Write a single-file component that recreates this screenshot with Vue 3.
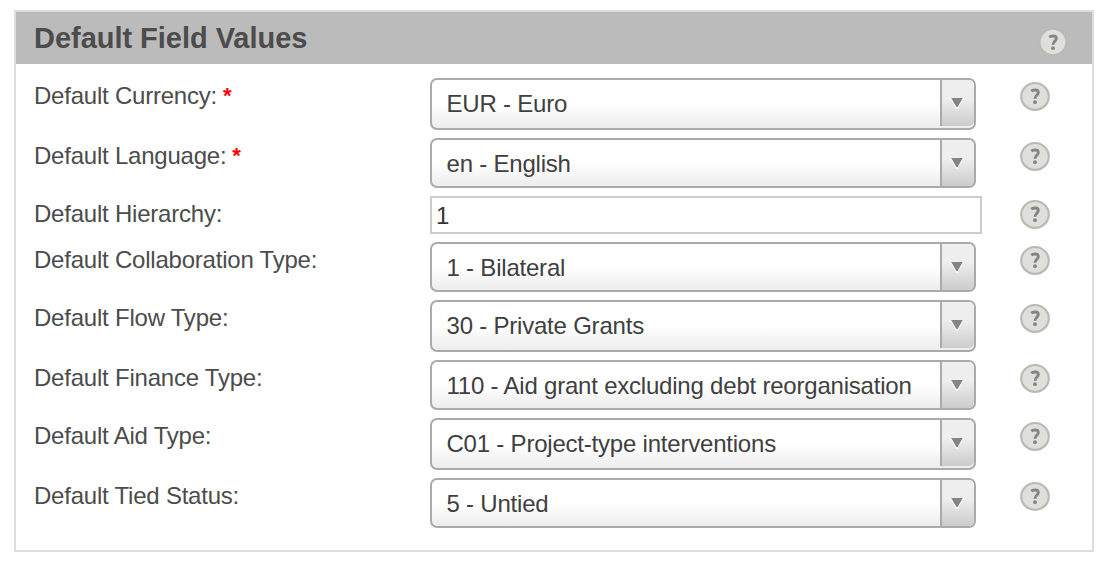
<script setup>
const rows = [
  { label: 'Default Currency:', value: 'EUR - Euro', required: true, tall: true },
  { label: 'Default Language:', value: 'en - English', required: true },
  { label: 'Default Hierarchy:', value: '1', input: true },
  { label: 'Default Collaboration Type:', value: '1 - Bilateral' },
  { label: 'Default Flow Type:', value: '30 - Private Grants', tall: true },
  { label: 'Default Finance Type:', value: '110 - Aid grant excluding debt reorganisation' },
  { label: 'Default Aid Type:', value: 'C01 - Project-type interventions', tall: true },
  { label: 'Default Tied Status:', value: '5 - Untied' },
]
</script>

<template>
  <section class="panel">
    <header class="head">
      <h2 class="title">Default Field Values</h2>
      <svg class="help head-help" viewBox="0 0 30 30">
        <ellipse cx="15" cy="15" rx="13.5" ry="13.3" class="disc" />
        <path class="hook" d="M11.2 10.2C13 8.7 18.3 8.1 18.3 11.5C18.3 14.2 15 14.4 15 17.8" />
        <circle cx="15" cy="21.2" r="1.9" class="dot" />
      </svg>
    </header>
    <div class="rows">
      <div v-for="row in rows" :key="row.label" class="row">
        <label class="label">{{ row.label }}<span v-if="row.required" class="req"> *</span></label>
        <div class="field">
          <div v-if="row.input" class="input">{{ row.value }}</div>
          <div v-else class="select" :class="{ tall: row.tall }">
            <span class="value">{{ row.value }}</span>
            <span class="button">
              <svg class="arrow" viewBox="0 0 14 12">
                <path d="M0 1H14L7.8 12H6.2Z" fill="#fff" opacity=".75" />
                <path d="M1.2 1H12.8L7.6 10H6.4Z" fill="#858585" />
              </svg>
            </span>
          </div>
        </div>
        <svg class="help" viewBox="0 0 30 30">
          <ellipse cx="15" cy="15.4" rx="13.8" ry="13.4" class="disc" />
          <path class="hook" d="M11.2 10.2C13 8.7 18.3 8.1 18.3 11.5C18.3 14.2 15 14.4 15 17.8" />
          <circle cx="15" cy="21.2" r="1.9" class="dot" />
        </svg>
      </div>
    </div>
  </section>
</template>

<style>
body { background: #fff; }
</style>

<style scoped>
.panel {
  box-sizing: border-box;
  width: 1080px;
  height: 542px;
  margin: 10px 0 0 14px;
  border: 2px solid #ddd;
  font-family: "Liberation Sans", Arial, sans-serif;
  font-size: 24px;
  color: #4c4c4c;
  display: flow-root;
}
.head {
  display: flex;
  justify-content: space-between;
  height: 52px;
  padding: 0 24px 0 18px;
  background: #bbb;
}
.title {
  margin: 9px 0 0;
  font-size: 29px;
  line-height: 34px;
  font-weight: bold;
  letter-spacing: -0.03px;
}
.rows {
  display: flex;
  flex-direction: column;
  gap: 8px;
  padding: 14px 0 0 18px;
}
.row { display: flex; align-items: flex-start; }
.label {
  width: 396px;
  padding-top: 4px;
  line-height: 28px;
  letter-spacing: -0.22px;
  white-space: pre;
}
.req { color: #f00; font-size: 22px; font-weight: bold; line-height: 1; position: relative; top: -1px; }
.field { width: 590px; }
.select {
  box-sizing: border-box;
  display: flex;
  width: 546px;
  height: 50px;
  border: 2px solid #aaa;
  border-radius: 7px;
  background: linear-gradient(#fff 0%, #fff 50%, #eee 96%, #eee 100%);
  color: #404040;
  overflow: hidden;
}
.select.tall { height: 52px; }
.value {
  flex: 1;
  padding: 10px 0 0 14.5px;
  line-height: 28px;
  letter-spacing: -0.21px;
  white-space: nowrap;
}
.button {
  width: 32px;
  height: 46px;
  border-left: 2px solid #aaa;
  border-radius: 0 5px 5px 0;
  background: linear-gradient(#eee 0%, #eee 40%, #ccc 100%);
}
.arrow {
  display: block;
  width: 14px;
  height: 12px;
  margin: 17px 0 0 8px;
}
.input {
  box-sizing: border-box;
  width: 552px;
  height: 38px;
  border: 2px solid #ccc;
  padding: 4px 0 0 4px;
  line-height: 28px;
  color: #333;
}
.help {
  display: block;
  width: 30px;
  height: 30px;
  margin-top: 3px;
}
.head-help { margin-top: 15px; }
.disc { fill: #dfe0db; stroke: #b9bab2; stroke-width: 2.2; }
.hook { fill: none; stroke: #858585; stroke-width: 2.9; }
.dot { fill: #858585; }
</style>
